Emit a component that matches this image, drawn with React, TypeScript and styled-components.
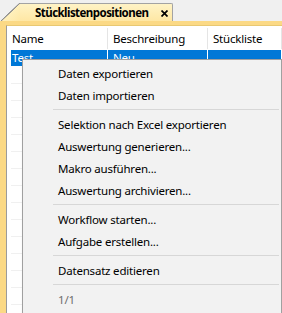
import React from 'react'
import styled, { createGlobalStyle } from 'styled-components'

const GlobalStyle = createGlobalStyle`
  html, body {
    margin: 0;
    padding: 0;
  }
  body {
    width: 282px;
    height: 313px;
    overflow: hidden;
    background: #ffffff;
    color: #000000;
    font-family: 'Noto Sans', 'Liberation Sans', sans-serif;
    font-size: 11.5px;
    letter-spacing: -0.2px;
  }
`

type MenuEntry = { label: string; disabled?: boolean } | 'sep'

const menu: MenuEntry[] = [
  { label: 'Daten exportieren' },
  { label: 'Daten importieren' },
  'sep',
  { label: 'Selektion nach Excel exportieren' },
  { label: 'Auswertung generieren...' },
  { label: 'Makro ausführen...' },
  { label: 'Auswertung archivieren...' },
  'sep',
  { label: 'Workflow starten...' },
  { label: 'Aufgabe erstellen...' },
  'sep',
  { label: 'Datensatz editieren' },
  'sep',
  { label: '1/1', disabled: true },
]

const columns = ['Name', 'Beschreibung', 'Stückliste']
const emptyRows = Array.from({ length: 15 })

const App = () => {
  return (
    <Window>
      <GlobalStyle />
      <TabStrip>
        <Tab>
          <TabLabel>Stücklistenpositionen</TabLabel>
          <CloseIcon width="7" height="7" viewBox="0 0 7 7">
            <path d="M0.5 0.5 L6.5 6.5 M6.5 0.5 L0.5 6.5" stroke="#000" strokeWidth="1.7" />
          </CloseIcon>
        </Tab>
      </TabStrip>
      <Panel>
        <Grid>
          <HeaderRow>
            {columns.map(c => (
              <HeaderCell key={c}>{c}</HeaderCell>
            ))}
          </HeaderRow>
          <Row selected>
            <Cell>Test</Cell>
            <Cell>Neu</Cell>
            <Cell></Cell>
          </Row>
          {emptyRows.map((_, i) => (
            <Row key={i} />
          ))}
        </Grid>
      </Panel>
      <ContextMenu>
        {menu.map((m, i) =>
          m === 'sep' ? (
            <Separator key={i} />
          ) : (
            <MenuItem key={i} disabled={m.disabled}>
              {m.label}
            </MenuItem>
          )
        )}
      </ContextMenu>
    </Window>
  )
}

export default App

const Window = styled.div`
  position: relative;
  width: 282px;
  height: 313px;
  display: flex;
  flex-direction: column;
  overflow: hidden;
`

const TabStrip = styled.div`
  height: 21px;
  flex: none;
  display: flex;
  align-items: flex-end;
  padding-left: 20px;
  background: #f0f0f0;
`

const Tab = styled.div`
  position: relative;
  height: 17px;
  width: 137px;
  display: flex;
  align-items: center;
  padding-left: 15px;
  border-top: 1px solid #a3a3a3;
  border-right: 1px solid #a3a3a3;
  border-top-right-radius: 2px;
  background: linear-gradient(#fff3c6, #fee7a4);

  &::before {
    content: '';
    position: absolute;
    left: -19px;
    top: -1px;
    width: 19px;
    height: 18px;
    background: linear-gradient(
      to bottom right,
      transparent calc(50% - 0.8px),
      #8f8f8f calc(50% - 0.3px),
      #8f8f8f calc(50% + 0.3px),
      #fff0bc calc(50% + 0.8px),
      #fee7a4
    );
  }
`

const TabLabel = styled.span`
  font-weight: 700;
  font-size: 11.5px;
  letter-spacing: -0.55px;
  white-space: nowrap;
`

const CloseIcon = styled.svg`
  margin-left: auto;
  margin-right: 4px;
  margin-top: 1px;
`

const Panel = styled.div`
  flex: 1;
  display: flex;
  padding: 4px 0 0 6px;
  background: #fbd985;
`

const Grid = styled.div`
  flex: 1;
  display: flex;
  flex-direction: column;
  background: #ffffff;
  border-left: 1px solid #9b9b9b;
  border-top: 1px solid #e8c872;
`

const HeaderRow = styled.div`
  height: 24px;
  flex: none;
  display: grid;
  grid-template-columns: 101px 100px 1fr;
  align-items: center;
`

const HeaderCell = styled.div`
  height: 21px;
  display: flex;
  align-items: center;
  padding-left: 5px;
  border-right: 1px solid #e5e5e5;
`

const Row = styled.div<{ selected?: boolean }>`
  height: 17px;
  flex: none;
  box-sizing: border-box;
  display: grid;
  grid-template-columns: 97px 100px 1fr;
  margin-left: 4px;
  border-bottom: 1px solid ${p => (p.selected ? '#ffffff' : '#f0f0f0')};
  background: ${p => (p.selected ? '#0078d7' : '#ffffff')};
  color: ${p => (p.selected ? '#ffffff' : '#000000')};
`

const Cell = styled.div`
  padding-left: 1px;
  line-height: 15px;
  border-right: 1px solid #ffffff;
  overflow: hidden;
  white-space: nowrap;

  &:not(:first-child) {
    padding-left: 5px;
  }
`

const ContextMenu = styled.div`
  position: absolute;
  left: 22px;
  top: 59px;
  width: 258px;
  padding: 2px 0 4px;
  background: #f2f2f2;
  border: 1px solid #a0a0a0;
  box-shadow: 2px 2px 3px rgba(0, 0, 0, 0.25);
`

const MenuItem = styled.div<{ disabled?: boolean }>`
  height: 22px;
  display: flex;
  align-items: center;
  padding-left: 35px;
  white-space: nowrap;
  color: ${p => (p.disabled ? '#6d6d6d' : '#000000')};
`

const Separator = styled.div`
  height: 1px;
  margin: 3px 2px 3px 30px;
  background: #d7d7d7;
`
